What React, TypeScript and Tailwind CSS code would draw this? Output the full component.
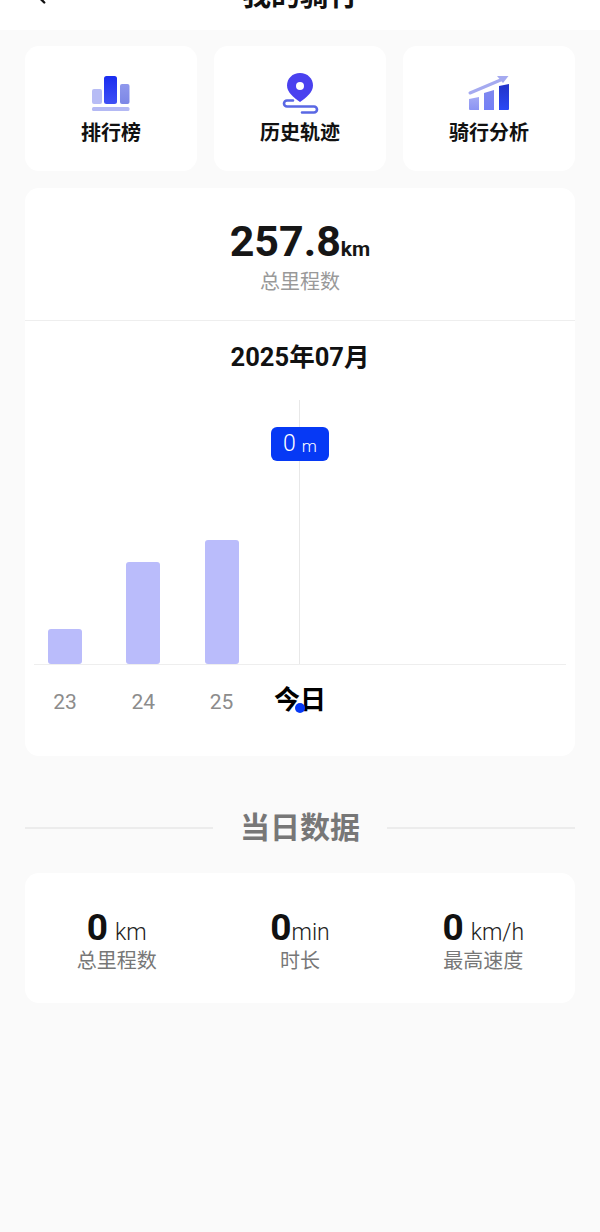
import type { ReactNode } from 'react';
import { ChevronLeft } from 'lucide-react';

const FONT = { fontFamily: 'Roboto, "Noto Sans CJK SC", sans-serif' };

function RankIcon() {
  return (
    <svg width="38" height="42" viewBox="0 -3 38 42" fill="none">
      <defs>
        <linearGradient id="rankMain" x1="0" y1="0" x2="0" y2="1">
          <stop offset="0" stopColor="#1a2df0" />
          <stop offset="1" stopColor="#3f50f5" />
        </linearGradient>
        <linearGradient id="rankSide" x1="0" y1="0" x2="0" y2="1">
          <stop offset="0" stopColor="#8f98ec" />
          <stop offset="1" stopColor="#7c87e6" />
        </linearGradient>
      </defs>
      <rect x="0" y="14" width="10" height="15" rx="2" fill="#b7bcf5" />
      <rect x="12" y="1" width="13" height="28" rx="2.500" fill="url(#rankMain)" />
      <rect x="28" y="9" width="9.500" height="20" rx="2" fill="url(#rankSide)" />
      <rect x="0" y="32" width="37.500" height="4" rx="1.500" fill="#b4b9f4" />
    </svg>
  );
}

function TrackIcon() {
  return (
    <svg width="38" height="42" viewBox="0 0 38 42" fill="none">
      <path
        d="M19 1C11.500 1 6 6.500 6 13.500 6 20 12.500 25.500 19 30c6.500-4.500 13-10 13-16.500C32 6.500 26.500 1 19 1Z"
        fill="#4a41ef"
      />
      <circle cx="19" cy="14" r="4" fill="#ffffff" />
      <path
        d="M12 28.500H6a3 3 0 0 0 0 6H33a3 3 0 0 1 0 6H21"
        stroke="#5a68e4"
        strokeWidth="2.600"
        strokeLinecap="round"
      />
    </svg>
  );
}

function AnalysisIcon() {
  return (
    <svg width="44" height="42" viewBox="0 -2 44 42" fill="none">
      <defs>
        <linearGradient id="barA" x1="0" y1="0" x2="0" y2="1">
          <stop offset="0" stopColor="#a3a9f5" />
          <stop offset="1" stopColor="#8b94f3" />
        </linearGradient>
        <linearGradient id="barB" x1="0" y1="0" x2="0" y2="1">
          <stop offset="0" stopColor="#7f88ef" />
          <stop offset="1" stopColor="#7480f6" />
        </linearGradient>
        <linearGradient id="barC" x1="0" y1="0" x2="0" y2="1">
          <stop offset="0" stopColor="#2233c8" />
          <stop offset="1" stopColor="#2a48f5" />
        </linearGradient>
      </defs>
      <path d="M3 19 36 5" stroke="#a5aaf0" strokeWidth="3" strokeLinecap="round" />
      <path d="M30 2H41.500L36 9Z" fill="#a5aaf0" />
      <path d="M2 25 12 23V36H3a1 1 0 0 1-1-1Z" fill="url(#barA)" />
      <path d="M17 19 27 16V36H17Z" fill="url(#barB)" />
      <path d="M32 12 42 10V35a1 1 0 0 1-1 1H32Z" fill="url(#barC)" />
    </svg>
  );
}

function Shortcut({ icon, label }: { icon: ReactNode; label: string }) {
  return (
    <div className="w-[172px] h-[125px] bg-white rounded-[14px] flex flex-col items-center">
      <div className="h-[42px] mt-[26px] flex items-start justify-center">{icon}</div>
      <span className="mt-[5px] text-[20px] leading-[28px] font-bold text-[#111]">{label}</span>
    </div>
  );
}

function Stat({ value, unit, label, gap }: { value: string; unit: string; label: string; gap?: boolean }) {
  return (
    <div className="flex-1 flex flex-col items-center">
      <div className="h-[38px] mt-[1px] flex items-baseline">
        <span className="text-[37px] leading-[38px] font-bold text-[#111]">{value}</span>
        <span className={`text-[23px] leading-[38px] font-light text-[#222] ${gap ? 'ml-[7px]' : ''}`}>{unit}</span>
      </div>
      <span className="mt-[1px] text-[20px] leading-[26px] text-[#777]">{label}</span>
    </div>
  );
}

const bars = [
  { day: '23', height: 35 },
  { day: '24', height: 102 },
  { day: '25', height: 124 },
];

export default function App() {
  return (
    <div style={FONT} className="w-[600px] h-[1232px] bg-[#fafafa] overflow-hidden">
      {/* Header */}
      <div className="relative h-[30px] bg-white overflow-hidden">
        <ChevronLeft className="absolute left-[28px] top-[-17px] w-[26px] h-[26px] text-[#111]" strokeWidth={2.2} />
        <div className="mt-[-24px] text-center text-[29px] leading-[40px] font-bold text-[#111]">我的骑行</div>
      </div>

      <div className="px-[25px]">
        {/* Shortcuts */}
        <div className="mt-[16px] flex justify-between">
          <Shortcut icon={<RankIcon />} label="排行榜" />
          <Shortcut icon={<TrackIcon />} label="历史轨迹" />
          <Shortcut icon={<AnalysisIcon />} label="骑行分析" />
        </div>

        {/* Total + chart */}
        <div className="mt-[17px] h-[568px] bg-white rounded-[14px]">
          <div className="h-[133px] border-b border-[#eeeeee] flex flex-col items-center">
            <div className="mt-[29px] h-[48px] flex items-baseline">
              <span className="text-[43px] leading-[48px] font-bold text-[#161616]">257.8</span>
              <span className="text-[21px] leading-[48px] font-bold text-[#161616]">km</span>
            </div>
            <span className="mt-[3px] text-[20px] leading-[28px] text-[#999]">总里程数</span>
          </div>

          <div className="mt-[20px] text-center text-[25.500px] leading-[32px] font-bold text-[#111]">2025年07月</div>

          <div className="relative mt-[27px] mx-[9px] h-[265px] border-b border-[#eeeeee] flex items-end gap-[44.300px] pl-[14px]">
            {bars.map((b) => (
              <div
                key={b.day}
                className="w-[34px] bg-[#babcfb] rounded-[3px]"
                style={{ height: b.height }}
              />
            ))}
            <div className="absolute left-[265px] top-0 bottom-0 w-[1px] bg-[#e8e8e8]" />
            <div className="absolute left-[237px] top-[27px] w-[58px] h-[34px] rounded-[6px] bg-[#0639f5] text-white flex items-center justify-center">
              <span className="text-[23px] leading-[34px] font-light">0</span>
              <span className="ml-[6px] mt-[3px] text-[17px] leading-[30px] font-light">m</span>
            </div>
          </div>

          <div className="relative mx-[9px] mt-[20px] flex gap-[44.300px] pl-[14px] h-[36px]">
            {bars.map((b) => (
              <div key={b.day} className="w-[34px] pt-[2px] text-center text-[21px] leading-[30px] text-[#8c8c8c]">
                {b.day}
              </div>
            ))}
            <div className="w-[34px] flex justify-center text-[26px] leading-[30px] font-bold text-black whitespace-nowrap">
              今日
            </div>
            <div className="absolute left-[261px] top-[18px] w-[10px] h-[10px] rounded-full bg-[#0639f5]" />
          </div>
        </div>

        {/* Section title */}
        <div className="mt-[53px] h-[38px] flex items-center">
          <div className="flex-1 h-[2px] bg-[#ececec]" />
          <span className="mx-[27px] text-[30px] leading-[38px] font-bold text-[#777]">当日数据</span>
          <div className="flex-1 h-[2px] bg-[#ececec]" />
        </div>

        {/* Daily stats */}
        <div className="mt-[26px] h-[130px] bg-white rounded-[14px] flex pt-[35px]">
          <Stat value="0" unit="km" label="总里程数" gap />
          <Stat value="0" unit="min" label="时长" />
          <Stat value="0" unit="km/h" label="最高速度" gap />
        </div>
      </div>
    </div>
  );
}
